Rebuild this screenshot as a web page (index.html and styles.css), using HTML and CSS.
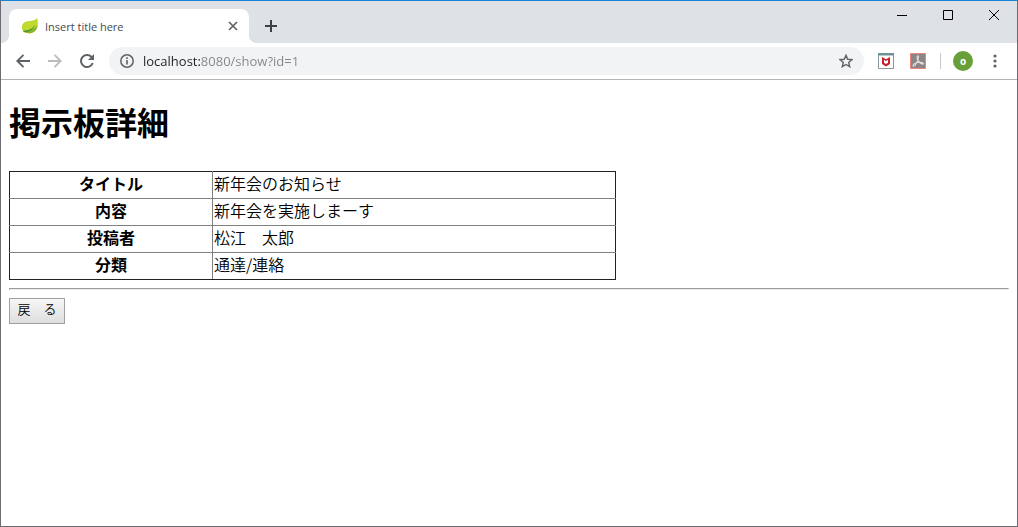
FILE: index.html
```html
<!DOCTYPE html>
<html lang="ja">
<head>
<meta charset="utf-8">
<title>Insert title here</title>
<link rel="stylesheet" href="styles.css">
</head>
<body>
<div class="window">
  <header class="tabstrip">
    <div class="tab">
      <svg class="favicon" width="18" height="18" viewBox="0 0 18 18" aria-hidden="true">
        <path d="M16 1c1.300 4 1.500 9-1.500 12.500C12 16.500 7 17 3.500 15.500 0 13 0 7 4 5 8 3.200 13 5 16 1z" fill="#c1d82f"/>
        <path d="M16.500 8c-2.500 4-7 5-14.500 5.500 1.500 2 4 3 7 2.700C13.500 15.700 16.500 12.500 16.500 8z" fill="#8cb52b"/>
        <path d="M2 13.800c5 0 9.500-1.800 12.300-6.300C12.500 13 8 15.500 3 15z" fill="#4f9a33"/>
      </svg>
      <span class="tab-title">Insert title here</span>
      <button class="icon-button tab-close" type="button" aria-label="Close tab">
        <svg width="10" height="10" viewBox="0 0 10 10"><path d="M1 1l8 8M9 1l-8 8" stroke="#5f6368" stroke-width="1.700"/></svg>
      </button>
    </div>
    <button class="icon-button new-tab" type="button" aria-label="New tab">
      <svg width="12" height="12" viewBox="0 0 12 12"><path d="M6 0v12M0 6h12" stroke="#3c4043" stroke-width="2"/></svg>
    </button>
    <div class="window-controls">
      <button class="icon-button control" type="button" aria-label="Minimize">
        <svg width="10" height="10" viewBox="0 0 10 10"><path d="M0 5.500h10" stroke="#000"/></svg>
      </button>
      <button class="icon-button control" type="button" aria-label="Maximize">
        <svg width="10" height="10" viewBox="0 0 10 10"><path d="M.5.500h9v9h-9z" fill="none" stroke="#000"/></svg>
      </button>
      <button class="icon-button control" type="button" aria-label="Close">
        <svg width="10" height="10" viewBox="0 0 10 10"><path d="M0 0l10 10M10 0L0 10" stroke="#000"/></svg>
      </button>
    </div>
  </header>
  <div class="toolbar">
    <button class="icon-button nav" type="button" aria-label="Back">
      <svg width="14" height="14" viewBox="0 0 14 14"><path d="M14 7H1.500M7.500.800L1.300 7l6.200 6.200" fill="none" stroke="#5f6368" stroke-width="1.900"/></svg>
    </button>
    <button class="icon-button nav" type="button" aria-label="Forward" disabled>
      <svg width="14" height="14" viewBox="0 0 14 14"><path d="M0 7h12.500M6.500.800L12.700 7l-6.200 6.200" fill="none" stroke="#babcbe" stroke-width="1.900"/></svg>
    </button>
    <button class="icon-button nav" type="button" aria-label="Reload">
      <svg width="14" height="14" viewBox="0 0 14 14"><path d="M12.700 9A6 6 0 1 1 11.300 2.800L12.300 4" fill="none" stroke="#5f6368" stroke-width="2"/><path d="M14 0v6H8z" fill="#5f6368"/></svg>
    </button>
    <div class="omnibox">
      <button class="icon-button info" type="button" aria-label="Site information">
        <svg width="14" height="14" viewBox="0 0 14 14"><circle cx="7" cy="7" r="6.200" fill="none" stroke="#5f6368" stroke-width="1.500"/><path d="M7 3.300v1.600M7 6v4.600" stroke="#5f6368" stroke-width="1.600"/></svg>
      </button>
      <input class="address" type="text" aria-label="Address" value="localhost:8080/show?id=1">
      <button class="icon-button star" type="button" aria-label="Bookmark">
        <svg width="14" height="14" viewBox="0 0 14 14"><path d="M7 1.300l1.700 4 4.300.400-3.300 2.800 1 4.200L7 10.500l-3.700 2.200 1-4.200L1 5.700l4.300-.4z" fill="none" stroke="#5f6368" stroke-width="1.400"/></svg>
      </button>
    </div>
    <div class="extensions">
      <button class="icon-button" type="button" aria-label="Web protection">
        <svg width="16" height="16" viewBox="0 0 16 16"><path d="M.5.500h15v15H.5z" fill="#fff" stroke="#8b979c"/><path d="M0 0h16v2.500H0z" fill="#71909b"/><path d="M4 4l4 2.200L12 4v7l-4 2.500L4 11z" fill="#c8202c"/><path d="M6 6.800l2 1.200 2-1.200v3L8 11l-2-1.200z" fill="#fff"/></svg>
      </button>
      <button class="icon-button" type="button" aria-label="PDF">
        <svg width="16" height="16" viewBox="0 0 16 16"><path d="M.5.500h15v15H.5z" fill="#8c8585" stroke="#ee8578"/><path d="M3 12.500c0-1.500 4-3.200 7-3.200 4 0 4 1.800 2.500 1.800C10 11 7 7 7 4.500 7 2.200 8.800 2.300 8.500 4.500 8 8 5 13.500 3.700 13.300 3.300 13.300 3 13 3 12.500z" fill="none" stroke="#e6dddd" stroke-width="1.100"/></svg>
      </button>
    </div>
    <span class="divider"></span>
    <button class="avatar" type="button" aria-label="Profile o">o</button>
    <button class="icon-button menu" type="button" aria-label="Menu">
      <svg width="4" height="14" viewBox="0 0 4 14" fill="#5f6368"><circle cx="2" cy="2" r="1.600"/><circle cx="2" cy="7" r="1.600"/><circle cx="2" cy="12" r="1.600"/></svg>
    </button>
  </div>
  <main class="page">
    <h1 class="heading">掲示板詳細</h1>
    <table class="details">
      <tr><th scope="row">タイトル</th><td>新年会のお知らせ</td></tr>
      <tr><th scope="row">内容</th><td>新年会を実施しまーす</td></tr>
      <tr><th scope="row">投稿者</th><td>松江　太郎</td></tr>
      <tr><th scope="row">分類</th><td>通達/連絡</td></tr>
    </table>
    <hr class="rule">
    <button class="back" type="button">戻　る</button>
  </main>
</div>
</body>
</html>
```
FILE: styles.css
```css
* { box-sizing: border-box; }
body {
  margin: 0;
  background: #fff;
  color: #000;
  font-family: "Open Sans", "Noto Sans CJK JP", sans-serif;
}
.window {
  display: flex;
  flex-direction: column;
  min-height: 100vh;
  border: 1px solid #6c6c70;
  border-top-color: #1883d7;
}
.icon-button {
  display: flex;
  align-items: center;
  justify-content: center;
  padding: 0;
  border: 0;
  background: none;
}
.tabstrip {
  display: flex;
  height: 42px;
  padding-left: 8px;
  background: #dee1e6;
}
.tab {
  position: relative;
  display: flex;
  align-items: center;
  width: 240px;
  margin-top: 8px;
  padding: 0 10px 0 12px;
  border-radius: 8px 8px 0 0;
  background: #fff;
}
.tab::before,
.tab::after {
  content: "";
  position: absolute;
  bottom: 0;
  width: 8px;
  height: 8px;
}
.tab::before {
  right: 100%;
  background: radial-gradient(circle at 0 0, #dee1e6 8px, #fff 8px);
}
.tab::after {
  left: 100%;
  background: radial-gradient(circle at 100% 0, #dee1e6 8px, #fff 8px);
}
.favicon { flex: none; }
.tab-title {
  flex: 1;
  margin-left: 6px;
  color: #45494d;
  font-size: 11px;
}
.tab-close {
  width: 12px;
  height: 16px;
}
.new-tab {
  width: 28px;
  height: 28px;
  margin: 11px 0 0 8px;
}
.window-controls {
  display: flex;
  margin-left: auto;
}
.control {
  width: 46px;
  height: 28px;
}
.toolbar {
  display: flex;
  align-items: center;
  height: 37px;
  padding: 0 8px 0 6px;
  border-bottom: 1px solid #b2b4b6;
}
.nav {
  width: 32px;
  height: 28px;
}
.omnibox {
  display: flex;
  flex: 1;
  align-items: center;
  height: 28px;
  margin-left: 6px;
  padding: 0 11px;
  border-radius: 14px;
  background: #f1f3f4;
}
.address {
  flex: 1;
  min-width: 0;
  height: 24px;
  margin-left: 9px;
  padding: 0;
  border: 0;
  outline: 0;
  background: linear-gradient(to right, #202124 58px, #80868b 58px);
  -webkit-background-clip: text;
  background-clip: text;
  color: transparent;
  font: 13px "Open Sans", sans-serif;
}
.extensions {
  display: flex;
  gap: 16px;
  margin-left: 14px;
}
.divider {
  width: 1px;
  height: 16px;
  margin: 0 12px 0 14px;
  background: #c8cacd;
}
.avatar {
  width: 20px;
  height: 20px;
  padding: 0;
  border: 0;
  border-radius: 50%;
  background: #689f38;
  color: #fff;
  font: bold 10px/18px "Open Sans", sans-serif;
}
.menu {
  width: 28px;
  height: 28px;
  margin-left: 8px;
}
.page {
  padding: 20px 8px;
  font-family: "Noto Sans CJK JP", sans-serif;
}
.heading {
  margin: 0 0 29px;
  font-size: 32px;
  line-height: 42px;
}
.details {
  border: 1px solid #222;
  border-collapse: collapse;
  font-size: 16px;
  line-height: 22px;
}
.details th,
.details td {
  box-sizing: content-box;
  padding: 0 1px 4px;
  border: 1px solid #808080;
}
.details th { width: 200px; }
.details td {
  width: 400px;
  font-weight: 350;
}
.details tr:first-child > * { border-top-color: #222; }
.details tr:last-child > * { border-bottom-color: #222; }
.details th { border-left-color: #222; }
.details td { border-right-color: #222; }
.rule {
  margin: 8px 0;
  border: 1px solid;
  border-color: #9a9a9a #eee #eee #9a9a9a;
}
.back {
  display: block;
  min-width: 56px;
  padding: 0 6px 4px;
  border: 1px solid #a0a0a0;
  background: linear-gradient(#f6f6f6, #dedede);
  color: #000;
  font: 350 13px/20px "Noto Sans CJK JP", sans-serif;
}
```
